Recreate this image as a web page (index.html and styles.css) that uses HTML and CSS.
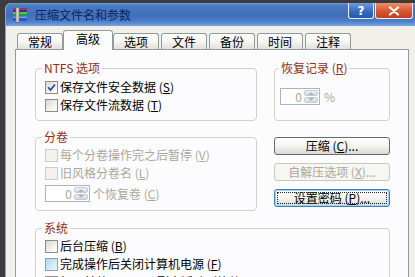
FILE: index.html
```
<!DOCTYPE html>
<html lang="zh-CN">
<head>
<meta charset="utf-8">
<title>压缩文件名和参数</title>
<link rel="stylesheet" href="styles.css">
</head>
<body>
<div class="window">
  <div class="titlebar">
    <svg class="app-icon" viewBox="0 0 16 16" width="16" height="16">
      <rect x="1" y="1" width="14" height="4" rx="1" fill="#3a2f8c"/>
      <rect x="1" y="1.5" width="14" height="1.2" fill="#d23a6a"/>
      <rect x="1" y="5" width="14" height="4" rx="1" fill="#1f9a3a"/>
      <rect x="1" y="5.5" width="14" height="1.2" fill="#7fd67a"/>
      <rect x="1" y="9" width="14" height="5" rx="1" fill="#2459c8"/>
      <rect x="1" y="9.5" width="14" height="1.4" fill="#7fb0f0"/>
      <rect x="4" y="0.5" width="3" height="14.5" fill="#d8d2c0" stroke="#7a715c" stroke-width="0.6"/>
    </svg>
    <span class="title">压缩文件名和参数</span>
    <div class="caption-buttons">
      <span class="cap-btn help">?</span>
      <span class="cap-btn close"><svg viewBox="0 0 12 10" width="12" height="10"><path d="M2 1.5 L10 8.5 M10 1.5 L2 8.5" stroke="#fff" stroke-width="2.2" stroke-linecap="round"/></svg></span>
    </div>
  </div>
  <div class="client">
    <div class="tabs">
      <div class="tab">常规</div>
      <div class="tab active">高级</div>
      <div class="tab">选项</div>
      <div class="tab">文件</div>
      <div class="tab">备份</div>
      <div class="tab">时间</div>
      <div class="tab">注释</div>
    </div>
    <div class="panel">
      <div class="row row-top">
        <fieldset class="group col-left">
          <legend>NTFS 选项</legend>
          <label class="check"><span class="box"><svg viewBox="0 0 11 11" width="11" height="11"><path d="M2.2 5.2 L4.5 8 L9 2.5" fill="none" stroke="#2f4f9c" stroke-width="1.8"/></svg></span>保存文件安全数据 (<u>S</u>)</label>
          <label class="check"><span class="box"></span>保存文件流数据 (<u>T</u>)</label>
        </fieldset>
        <fieldset class="group col-right">
          <legend>恢复记录 (<u>R</u>)</legend>
          <div class="spin-line rec">
            <span class="spin spin-rec"><span class="val">0</span><span class="updown"><i class="up"></i><i class="down"></i></span></span>
            <span class="muted pct">%</span>
          </div>
        </fieldset>
      </div>
      <div class="row row-mid">
        <fieldset class="group col-left vol">
          <legend>分卷</legend>
          <label class="check muted"><span class="box off"></span>每个分卷操作完之后暂停 (<u>V</u>)</label>
          <label class="check muted"><span class="box off"></span>旧风格分卷名 (<u>L</u>)</label>
          <div class="spin-line vol-spin">
            <span class="spin spin-vol"><span class="val">0</span><span class="updown"><i class="up"></i><i class="down"></i></span></span>
            <span class="muted spin-label">个恢复卷 (<u>C</u>)</span>
          </div>
        </fieldset>
        <div class="buttons">
          <div class="btn">压缩 (<u>C</u>)...</div>
          <div class="btn disabled">自解压选项 (<u>X</u>)...</div>
          <div class="btn focus">设置密码 (<u>P</u>)...</div>
        </div>
      </div>
      <fieldset class="group wide">
        <legend>系统</legend>
        <label class="check"><span class="box"></span>后台压缩 (<u>B</u>)</label>
        <label class="check"><span class="box hover"></span>完成操作后关闭计算机电源 (<u>F</u>)</label>
        <label class="check"><span class="box"></span>如果其他 WinRAR 副本活动则等待 (<u>W</u>)</label>
      </fieldset>
    </div>
  </div>
</div>
</body>
</html>
```
FILE: styles.css
```
html, body {
  margin: 0;
  padding: 0;
}
body {
  width: 415px;
  height: 277px;
  overflow: hidden;
  background: #3c3c3c;
  font-family: "Noto Sans CJK SC", "Noto Sans", sans-serif;
  font-size: 12px;
  color: #000;
}
u {
  text-decoration: underline;
  text-underline-offset: 1px;
}
.window {
  margin: 3px 0 0 5px;
  width: 410px;
  height: 274px;
  box-sizing: border-box;
  background: #f0efea;
  border-left: 1px solid #97a3b4;
  border-top-left-radius: 6px;
  overflow: hidden;
}
.titlebar {
  height: 23px;
  display: flex;
  align-items: flex-start;
  background: linear-gradient(to bottom, #7099d6 0, #4a7cc4 10%, #3f6fb8 55%, #4d7fc6 80%, #78a2dc 100%);
}
.app-icon {
  flex: none;
  margin: 4px 0 0 6px;
}
.title {
  margin: 3px 0 0 7px;
  line-height: 17px;
  color: #0f2462;
  font-size: 12px;
}
.caption-buttons {
  display: flex;
  gap: 1px;
  margin-left: auto;
  margin-right: 2px;
}
.cap-btn {
  height: 16px;
  box-sizing: border-box;
  border: 1px solid #e8eef8;
  border-top: none;
  border-radius: 0 0 3px 3px;
  display: flex;
  align-items: center;
  justify-content: center;
}
.help {
  width: 26px;
  background: linear-gradient(to bottom, #6e9be0, #3566c0 60%, #2b58ad);
  color: #fff;
  font-family: "DejaVu Sans", sans-serif;
  font-weight: bold;
  font-size: 12px;
  line-height: 14px;
}
.close {
  width: 38px;
  background: linear-gradient(to bottom, #ec8f6e, #d8552f 55%, #c2401f);
}
.client {
  padding: 4px 0 0 9px;
}
.tabs {
  display: flex;
  align-items: flex-end;
  gap: 2px;
  height: 19px;
  padding-left: 2px;
}
.tab {
  width: 46px;
  height: 16px;
  box-sizing: border-box;
  border: 1px solid #919b9c;
  border-bottom: none;
  border-radius: 3px 3px 0 0;
  background: linear-gradient(to bottom, #ffffff, #f4f4f0 55%, #e2e1da);
  text-align: center;
  line-height: 15px;
}
.tab.active {
  width: 50px;
  height: 20px;
  margin: 0 -2px -1px;
  background: #fcfcfe;
  line-height: 15px;
  position: relative;
  z-index: 1;
}
.panel {
  width: 394px;
  height: 240px;
  box-sizing: border-box;
  border: 1px solid #919b9c;
  background: #fcfcfe;
  padding: 11px 0 0 19px;
}
.row {
  display: flex;
  gap: 17px;
  align-items: stretch;
}
.row-top {
  margin-bottom: 9px;
}
.row-mid {
  margin-bottom: 10px;
}
.group {
  margin: 0;
  min-width: 0;
  box-sizing: border-box;
  border: 1px solid #d3d1c6;
  border-radius: 4px;
  padding: 3px 8px 6px 9px;
}
.group legend {
  padding: 0 2px;
  margin-left: -3px;
  line-height: 14px;
  color: #8f2f18;
}
.col-left {
  width: 222px;
}
.col-right {
  width: 116px;
  padding-left: 7px;
}
.vol {
  padding-top: 2px;
  padding-bottom: 8px;
}
.wide {
  width: 355px;
  padding-top: 2px;
}
.check {
  display: flex;
  align-items: center;
  height: 18px;
  line-height: 14px;
  white-space: nowrap;
}
.box {
  flex: none;
  width: 13px;
  height: 13px;
  box-sizing: border-box;
  border: 1px solid #8d8d8a;
  background: linear-gradient(135deg, #d9d9d2, #f6f6f3 70%, #ffffff);
  margin-right: 2px;
  display: flex;
  align-items: center;
  justify-content: center;
}
.box.off {
  border-color: #cfcdc3;
  background: #f3f2ee;
}
.box.hover {
  border-color: #8aa2b8;
  background: linear-gradient(135deg, #aed7f2, #d4ecfa 60%, #eaf6fd);
}
.muted {
  color: #aca899;
}
.spin-line {
  display: flex;
  align-items: center;
}
.rec {
  margin-top: 10px;
}
.vol-spin {
  margin-top: 3px;
}
.spin {
  display: flex;
  height: 17px;
  box-sizing: border-box;
  border: 1px solid #aab3c2;
  background: #fff;
}
.spin-rec {
  width: 40px;
  margin-left: -2px;
}
.spin-vol {
  width: 45px;
}
.val {
  flex: 1;
  text-align: right;
  padding-right: 2px;
  line-height: 15px;
  color: #aca899;
}
.updown {
  width: 15px;
  display: flex;
  flex-direction: column;
  gap: 1px;
  padding: 1px 1px 1px 0;
  box-sizing: border-box;
}
.updown i {
  flex: 1;
  border-radius: 2px;
  background: linear-gradient(to bottom, #eef1f6, #d3d9e3);
  border: 1px solid #c4cbd6;
  position: relative;
}
.updown i::after {
  content: "";
  position: absolute;
  left: 50%;
  top: 50%;
  margin: -1px 0 0 -3px;
  border-left: 3px solid transparent;
  border-right: 3px solid transparent;
}
.updown .up::after {
  border-bottom: 3px solid #b5b5b0;
}
.updown .down::after {
  margin-top: -2px;
  border-top: 3px solid #b5b5b0;
}
.pct {
  margin-left: 4px;
}
.spin-label {
  margin-left: 3px;
  white-space: nowrap;
}
.buttons {
  width: 116px;
  display: flex;
  flex-direction: column;
  gap: 8px;
  padding-top: 7px;
}
.btn {
  height: 18px;
  box-sizing: border-box;
  border: 1px solid #6c6c6c;
  border-radius: 3px;
  background: linear-gradient(to bottom, #ffffff, #f4f4f1 50%, #d9d9d3);
  display: flex;
  align-items: center;
  justify-content: center;
  line-height: 14px;
  white-space: nowrap;
  position: relative;
}
.btn.disabled {
  border-color: #c9c8bf;
  background: #f6f6f2;
  color: #aca899;
}
.btn.focus {
  border-color: #3a80bd;
  box-shadow: inset 0 0 0 1px #a4d3f4;
}
.btn.focus::after {
  content: "";
  position: absolute;
  inset: 2px;
  border: 1px dotted #222;
}
```
